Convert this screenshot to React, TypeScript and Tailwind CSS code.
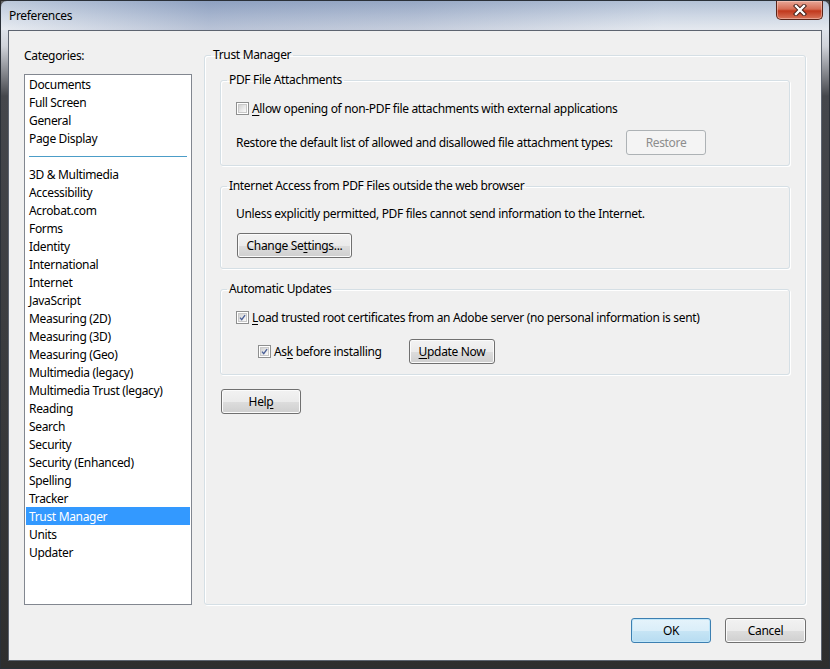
import type { ReactNode } from "react";

const categoriesTop = ["Documents", "Full Screen", "General", "Page Display"];
const categoriesRest = [
  "3D & Multimedia",
  "Accessibility",
  "Acrobat.com",
  "Forms",
  "Identity",
  "International",
  "Internet",
  "JavaScript",
  "Measuring (2D)",
  "Measuring (3D)",
  "Measuring (Geo)",
  "Multimedia (legacy)",
  "Multimedia Trust (legacy)",
  "Reading",
  "Search",
  "Security",
  "Security (Enhanced)",
  "Spelling",
  "Tracker",
  "Trust Manager",
  "Units",
  "Updater",
];

function Key({ children }: { children: ReactNode }) {
  return <span className="underline underline-offset-[2px]">{children}</span>;
}

function Checkbox({ checked }: { checked?: boolean }) {
  return (
    <span className="flex h-[13px] w-[13px] shrink-0 border border-[#8e8f8f] bg-white p-[1px]">
      <span className="flex h-full w-full items-center justify-center border border-[#c9c9c9] bg-[linear-gradient(135deg,#d2d2d2_0%,#e9e9e9_55%,#fafafa_100%)]">
        {checked && (
          <svg width="9" height="9" viewBox="0 0 9 9">
            <path d="M1.3 4.6 L3.5 7.2 L7.8 1.4" fill="none" stroke="#4a5f97" strokeWidth="1.7" />
          </svg>
        )}
      </span>
    </span>
  );
}

function Button({
  children,
  width = "w-[80px]",
  disabled,
  primary,
}: {
  children: ReactNode;
  width?: string;
  disabled?: boolean;
  primary?: boolean;
}) {
  const look = disabled
    ? "border-[#adb2b5] bg-[#f4f4f4] text-[#8d8d8d]"
    : primary
      ? "border-[#3c7fb1] bg-[linear-gradient(180deg,#e5f3fb_0%,#daeef9_50%,#c7e5f5_51%,#b7dcf1_100%)] shadow-[inset_0_0_0_1px_#bfe6fa] text-black"
      : "border-[#707070] bg-[linear-gradient(180deg,#f2f2f2_0%,#ebebeb_50%,#dddddd_51%,#cfcfcf_100%)] shadow-[inset_0_0_0_1px_#fbfbfb] text-black";
  return (
    <div className={`flex h-[25px] ${width} shrink-0 items-center justify-center rounded-[3px] border pt-px ${look}`}>
      {children}
    </div>
  );
}

function Group({ title, children, className = "" }: { title: string; children: ReactNode; className?: string }) {
  return (
    <fieldset className={`rounded-[3px] border border-[#d5dfe5] p-0 shadow-[inset_1px_1px_0_#ffffff,1px_1px_0_#ffffff] ${className}`}>
      <legend className="ml-[6px] px-[2px] leading-[16px]">{title}</legend>
      {children}
    </fieldset>
  );
}

export default function App() {
  return (
    <div className="h-[669px] w-[830px] bg-[#2c2c2c] font-['Noto_Sans',sans-serif] text-[12px] leading-[16px] tracking-[-0.33px] text-black">
      <div className="flex h-full w-full flex-col rounded-t-[7px] border border-[#2a3038] bg-[linear-gradient(180deg,#a6b7cf_0px,#c4cfdf_14px,#dfe4ec_28px,#d0d3da_45px,#45474c_95px,#2e2e2e_100%)]">
        {/* title bar */}
        <div className="flex h-[29px] shrink-0 items-start bg-[linear-gradient(90deg,rgba(255,255,255,0.25)_0%,rgba(70,95,150,0.25)_25%,rgba(80,100,150,0.18)_50%,rgba(255,255,255,0.15)_80%)]">
          <span className="mt-[7px] pl-[8px] text-black">Preferences</span>
          <div className="ml-auto mr-[6px] flex h-[19px] w-[47px] items-center justify-center rounded-b-[5px] border border-t-0 border-[#5a2418] bg-[linear-gradient(180deg,#e8a797_0%,#d66d55_45%,#c1381c_55%,#d8745a_100%)] shadow-[inset_0_0_0_1px_rgba(255,220,210,0.45)]">
            <svg width="14" height="12" viewBox="0 0 14 12">
              <path d="M3 2 L11 10 M11 2 L3 10" stroke="#3c1a14" strokeWidth="4.2" strokeLinecap="square" />
              <path d="M3 2 L11 10 M11 2 L3 10" stroke="#ffffff" strokeWidth="2.4" strokeLinecap="square" />
            </svg>
          </div>
        </div>

        {/* client area */}
        <div className="mx-[7px] mb-[7px] flex flex-1 flex-col border border-[#5d6470] bg-[#f0f0f0]">
          <div className="flex pl-[15px] pt-[16px]">
            {/* categories */}
            <div className="w-[168px] shrink-0">
              <div className="pt-px">Categories:</div>
              <div className="mt-[10px] h-[531px] border border-[#828790] bg-white px-[1px]">
                {categoriesTop.map((c) => (
                  <div key={c} className="h-[18px] px-[3px] pt-px leading-[18px]">
                    {c}
                  </div>
                ))}
                <div className="flex h-[18px] items-center px-[3px]">
                  <div className="h-px w-full bg-[#4c9dc8]" />
                </div>
                {categoriesRest.map((c) => (
                  <div
                    key={c}
                    className={`h-[18px] px-[3px] pt-px leading-[18px] ${c === "Trust Manager" ? "bg-[#3399ff] text-white" : ""}`}
                  >
                    {c}
                  </div>
                ))}
              </div>
            </div>

            {/* trust manager panel */}
            <Group title="Trust Manager" className="ml-[12px] w-[602px]">
              <div className="px-[15px] pb-[10px]">
                <Group title="PDF File Attachments" className="mt-[9px]">
                  <div className="px-[15px] pb-[10px]">
                    <div className="mt-[12px] flex items-center gap-[3px]">
                      <Checkbox />
                      <span className="pt-px">
                        <Key>A</Key>llow opening of non-PDF file attachments with external applications
                      </span>
                    </div>
                    <div className="mt-[13px] flex items-center">
                      <span className="w-[390px] shrink-0 pt-px">
                        Restore the default list of allowed and disallowed file attachment types:
                      </span>
                      <Button disabled>Restore</Button>
                    </div>
                  </div>
                </Group>

                <Group title="Internet Access from PDF Files outside the web browser" className="mt-[12px]">
                  <div className="px-[15px] pb-[10px]">
                    <div className="mt-[11px] pt-px">
                      Unless explicitly permitted, PDF files cannot send information to the Internet.
                    </div>
                    <div className="mt-[11px] pl-px">
                      <Button width="w-[115px]">
                        <span>
                          Change Se<Key>t</Key>tings...
                        </span>
                      </Button>
                    </div>
                  </div>
                </Group>

                <Group title="Automatic Updates" className="mt-[12px]">
                  <div className="px-[15px] pb-[10px]">
                    <div className="mt-[12px] flex items-center gap-[3px]">
                      <Checkbox checked />
                      <span className="pt-px">
                        <Key>L</Key>oad trusted root certificates from an Adobe server (no personal information is sent)
                      </span>
                    </div>
                    <div className="mt-[13px] flex items-center pl-[22px]">
                      <div className="flex w-[151px] shrink-0 items-center gap-[3px]">
                        <Checkbox checked />
                        <span className="pt-px">
                          As<Key>k</Key> before installing
                        </span>
                      </div>
                      <Button width="w-[86px]">
                        <span>
                          <Key>U</Key>pdate Now
                        </span>
                      </Button>
                    </div>
                  </div>
                </Group>

                <div className="mt-[14px] pl-px">
                  <Button>
                    <span>
                      Hel<Key>p</Key>
                    </span>
                  </Button>
                </div>
              </div>
            </Group>
          </div>

          <div className="mt-auto flex justify-end gap-[14px] pb-[17px] pr-[15px]">
            <Button primary>OK</Button>
            <Button width="w-[81px]">Cancel</Button>
          </div>
        </div>
      </div>
    </div>
  );
}
